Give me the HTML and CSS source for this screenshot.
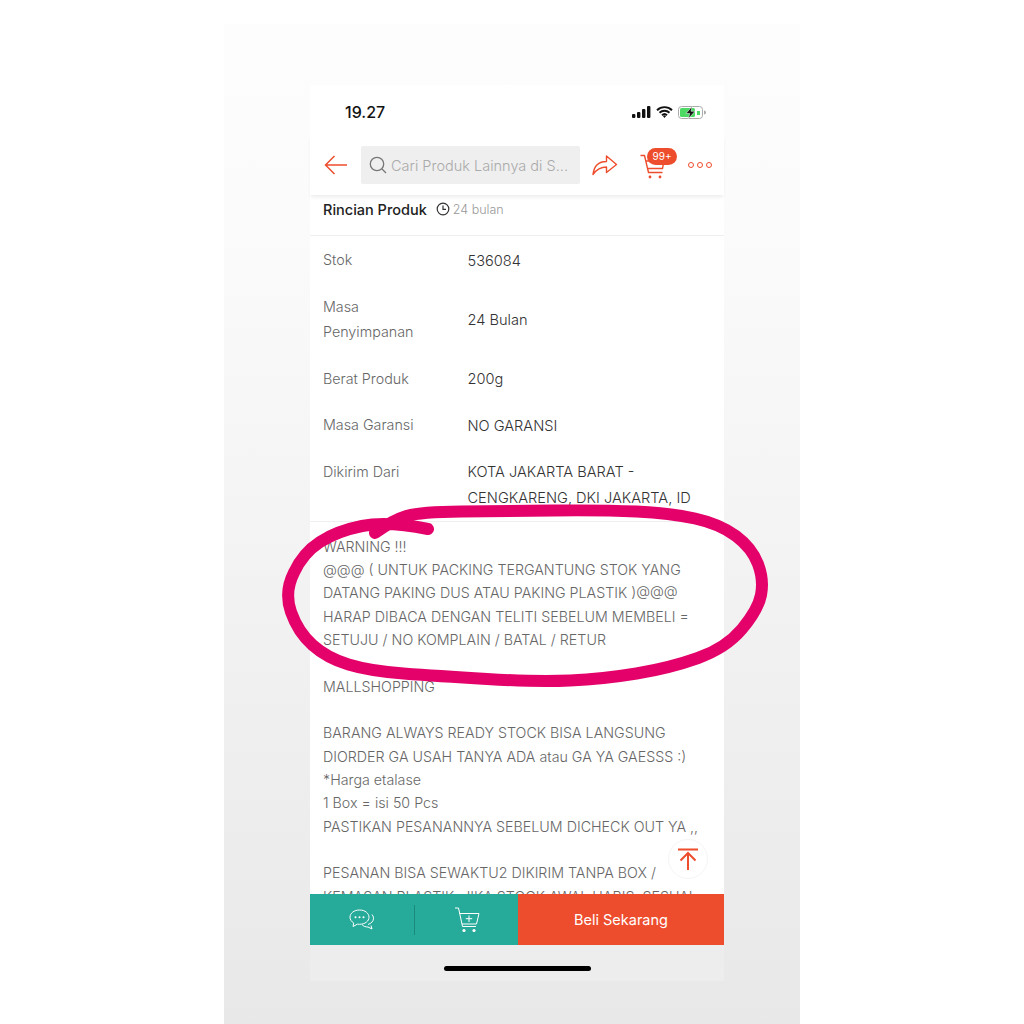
FILE: index.html
```html
<!DOCTYPE html>
<html lang="en">
<head>
    <meta charset="UTF-8">
    <title>Rincian Produk</title>
    <link rel="stylesheet" href="styles.css">
</head>
<body>
    <div class="backdrop">
        <div class="phone">
            <div class="status-bar">
                <span class="status-time">19.27</span>
                <div class="status-icons">
                    <svg width="19" height="12" viewBox="0 0 19 12"><rect x="0" y="8" width="3.4" height="4" rx="1" fill="#111"/><rect x="5" y="6" width="3.4" height="6" rx="1" fill="#111"/><rect x="10" y="3" width="3.4" height="9" rx="1" fill="#111"/><rect x="15" y="0" width="3.4" height="12" rx="1" fill="#111"/></svg>
                    <svg width="17" height="12" viewBox="0 0 17 12"><path d="M1 4.2a10.8 10.8 0 0 1 15 0M3.5 6.8a7.2 7.2 0 0 1 10 0M6 9.2a3.6 3.6 0 0 1 5 0" fill="none" stroke="#111" stroke-width="1.9"/><path d="M6.9 10l1.6 2 1.6-2a2.4 2.4 0 0 0-3.2 0z" fill="#111"/></svg>
                    <svg width="28" height="13" viewBox="0 0 28 13"><rect x=".5" y=".5" width="24" height="12" rx="3" fill="none" stroke="#aaa"/><rect x="2" y="2" width="15" height="9" rx="1.5" fill="#4cd964"/><rect x="19" y="5" width="3" height="4" fill="#4cd964"/><path d="M14 0.500L8 7.500h3.800L10.300 12.800 17 5.300h-3.900z" fill="#111" stroke="#fff" stroke-width=".5"/><path d="M26 4.500a2 2 0 0 1 0 4z" fill="#aaa"/></svg>
                </div>
            </div>

            <header class="top-bar">
                <svg class="back-icon" width="24" height="20" viewBox="0 0 24 20"><path d="M23 10H1.500M10.500 1L1.500 10l9 9" fill="none" stroke="#ee4d2d" stroke-width="1.500"/></svg>
                <div class="search-box">
                    <svg width="18" height="18" viewBox="0 0 18 18"><circle cx="8" cy="8" r="6.700" fill="none" stroke="#777" stroke-width="1.300"/><path d="M13 13l4 4" stroke="#777" stroke-width="1.300"/></svg>
                    <span>Cari Produk Lainnya di S...</span>
                </div>
                <svg class="share-icon" width="26" height="22" viewBox="0 0 26 22"><path d="M1 20.500C2 12 7 7.500 14.500 7.500V2l10 8.500-10 8v-5.500C9 13 4.500 15.500 1 20.500z" fill="none" stroke="#ee4d2d" stroke-width="1.400" stroke-linejoin="round"/></svg>
                <div class="cart">
                    <svg width="25" height="25" viewBox="0 0 25 25"><path d="M0.500 1.500H4.500L8.500 18.500H22.500M6 7H24L22.500 14.500H7.500" fill="none" stroke="#ee4d2d" stroke-width="1.400"/><circle cx="10" cy="23" r="1.400" fill="#ee4d2d"/><circle cx="20" cy="23" r="1.400" fill="#ee4d2d"/></svg>
                    <span class="cart-badge">99+</span>
                </div>
                <div class="more-dots"><i></i><i></i><i></i></div>
            </header>

            <main class="content">
                <div class="detail-head">
                    <span class="detail-title">Rincian Produk</span>
                    <svg width="14" height="14" viewBox="0 0 14 14"><circle cx="7" cy="7" r="5.800" fill="none" stroke="#333" stroke-width="1.200"/><path d="M7 3.500V7.300H10" fill="none" stroke="#333" stroke-width="1.200"/></svg>
                    <span class="detail-age">24 bulan</span>
                </div>

                <div class="spec-list">
                    <div class="spec-row"><div class="spec-label">Stok</div><div class="spec-value">536084</div></div>
                    <div class="spec-row"><div class="spec-label">Masa<br>Penyimpanan</div><div class="spec-value">24 Bulan</div></div>
                    <div class="spec-row"><div class="spec-label">Berat Produk</div><div class="spec-value">200g</div></div>
                    <div class="spec-row"><div class="spec-label">Masa Garansi</div><div class="spec-value">NO GARANSI</div></div>
                    <div class="spec-row spec-row-top"><div class="spec-label">Dikirim Dari</div><div class="spec-value">KOTA JAKARTA BARAT -<br>CENGKARENG, DKI JAKARTA, ID</div></div>
                </div>

                <p class="description">WARNING !!!<br>
                @@@ ( UNTUK PACKING TERGANTUNG STOK YANG<br>
                DATANG PAKING DUS ATAU PAKING PLASTIK )@@@<br>
                HARAP DIBACA DENGAN TELITI SEBELUM MEMBELI =<br>
                SETUJU / NO KOMPLAIN / BATAL / RETUR<br>
                <br>
                MALLSHOPPING<br>
                <br>
                BARANG ALWAYS READY STOCK BISA LANGSUNG<br>
                DIORDER GA USAH TANYA ADA atau GA YA GAESSS :)<br>
                *Harga etalase<br>
                1 Box = isi 50 Pcs<br>
                PASTIKAN PESANANNYA SEBELUM DICHECK OUT YA ,,<br>
                <br>
                PESANAN BISA SEWAKTU2 DIKIRIM TANPA BOX /<br>
                KEMASAN PLASTIK, JIKA STOCK AWAL HABIS, SESUAI</p>

                <div class="to-top">
                    <svg width="22" height="22" viewBox="0 0 22 22"><path d="M1 1.500H21M11 22V5M3.500 12.500L11 5l7.500 7.500" fill="none" stroke="#ee4d2d" stroke-width="2"/></svg>
                </div>
            </main>

            <div class="bottom-bar">
                <div class="teal-part">
                    <div class="teal-cell">
                        <svg width="26" height="21" viewBox="0 0 26 21"><path d="M19 15.500c3-1 5.500-3 5.500-6.200 0-1.500-.6-2.800-1.500-3.800" fill="none" stroke="#fff" stroke-width="1"/><path d="M10.500 1C5 1 1 4.300 1 8.200c0 2.400 1.500 4.500 3.700 5.800L4 17.500l4.500-2.400c.7.100 1.400.2 2 .2 5.500 0 9.500-3.200 9.500-7.100S16 1 10.500 1z" fill="none" stroke="#fff" stroke-width="1"/><path d="M13 15.500c1.500 2 4 2.500 6 2.500l4 2-1-3.500" fill="none" stroke="#fff" stroke-width="1"/><circle cx="6.500" cy="8.200" r="1" fill="#fff"/><circle cx="10.500" cy="8.200" r="1" fill="#fff"/><circle cx="14.500" cy="8.200" r="1" fill="#fff"/></svg>
                    </div>
                    <div class="teal-cell teal-cell-cart">
                        <svg width="26" height="26" viewBox="0 0 26 26"><path d="M1 1H4.500L8.500 19.500H22M5.500 6.500H25L22.500 17H8" fill="none" stroke="#fff" stroke-width="1"/><path d="M15 8.500v6.500M11.800 11.700h6.400" stroke="#fff" stroke-width="1"/><circle cx="10" cy="23.500" r="1.600" fill="#fff"/><circle cx="20" cy="23.500" r="1.600" fill="#fff"/></svg>
                    </div>
                </div>
                <div class="buy-now">Beli Sekarang</div>
            </div>

            <div class="home-area"><span class="home-indicator"></span></div>
        </div>
    </div>

    <!-- pen scribble drawn on top of the screenshot -->
    <svg class="ink" width="1024" height="1024" viewBox="0 0 1024 1024">
        <path d="M428 529 Q387 521 362 526 Q337 531 320 542 Q303 553 294 572.500 Q284 592 291 612 Q298 632 312.500 645 Q327 658 348.500 664.500 Q370 671 403.500 673.500 Q437 676 487 679 Q537 682 570 680.500 Q603 679 636.500 673.500 Q670 668 698 658 Q726 648 742 629 Q758 610 761 595 Q764 580 758 564 Q752 548 736 536 Q720 524 695 518.500 Q670 513 636.500 511.500 Q603 510 553 510.500 Q503 511 461.500 511.500 Q420 512 406.500 516 Q393 520 375 533" fill="none" stroke="#e4026a" stroke-width="12" stroke-linecap="round" stroke-linejoin="round"/>
    </svg>
</body>
</html>
```

FILE: styles.css
```css
* {
    margin: 0;
    padding: 0;
    box-sizing: border-box;
}

body {
    position: relative;
    height: 1024px;
    overflow: hidden;
    background: white;
    font-family: Inter, 'Noto Sans', sans-serif;
    color: #555;
}

.backdrop {
    width: 576px;
    height: 1000px;
    margin: 24px auto 0;
    padding: 61px 0 0 86px;
    background: linear-gradient(#fdfdfd, #fbfbfb 20%, #e8e8e8);
}

.phone {
    display: flex;
    flex-direction: column;
    width: 414px;
    height: 896px;
    background: white;
}

.status-bar {
    display: flex;
    justify-content: space-between;
    align-items: center;
    height: 50px;
    padding: 4px 18px 0 35px;
    flex-shrink: 0;
}

.status-time {
    font-size: 16px;
    font-weight: 500;
    color: #111;
}

.status-icons {
    display: flex;
    align-items: center;
    gap: 5px;
}

.top-bar {
    display: flex;
    align-items: center;
    height: 60px;
    padding-left: 14px;
    flex-shrink: 0;
    background: white;
    box-shadow: 0 3px 4px -1px rgba(0,0,0,0.08);
    position: relative;
    z-index: 2;
}

.back-icon {
    flex-shrink: 0;
}

.search-box {
    display: flex;
    align-items: center;
    gap: 4px;
    width: 219px;
    height: 38px;
    margin-left: 13px;
    padding-left: 8px;
    background: #efefef;
    border-radius: 2px;
    font-size: 14.5px;
    font-weight: 300;
    color: #aaa;
    white-space: nowrap;
}

.share-icon {
    margin-left: 12px;
    flex-shrink: 0;
}

.cart {
    position: relative;
    width: 25px;
    height: 25px;
    margin-left: 22px;
    margin-top: 3px;
}

.cart-badge {
    position: absolute;
    top: -6px;
    left: 7px;
    width: 30px;
    height: 17px;
    border-radius: 9px;
    background: #ee4d2d;
    color: #fff;
    font-size: 10px;
    line-height: 17px;
    text-align: center;
}

.more-dots {
    display: flex;
    gap: 3px;
    margin-left: 23px;
}

.more-dots i {
    width: 6px;
    height: 6px;
    border: 1px solid #ee4d2d;
    border-radius: 50%;
}

.content {
    position: relative;
    flex: 1;
    overflow: hidden;
    background: white;
}

.detail-head {
    display: flex;
    align-items: center;
    height: 41px;
    padding: 0 13px 12px;
    border-bottom: 1px solid #efefef;
}

.detail-title {
    font-size: 14.5px;
    font-weight: 500;
    color: #222;
}

.detail-head svg {
    margin-left: 9px;
}

.detail-age {
    margin-left: 3px;
    font-size: 12.5px;
    font-weight: 300;
    color: #999;
}

.spec-list {
    display: flex;
    flex-direction: column;
    gap: 21px;
    padding: 11px 13px 11px;
    border-bottom: 1px solid #efefef;
    font-size: 14.3px;
    font-weight: 300;
    line-height: 25.5px;
}

.spec-row {
    display: flex;
    align-items: center;
}

.spec-row-top {
    align-items: flex-start;
}

.spec-label {
    width: 144.5px;
    color: #666;
}

.spec-value {
    margin: 1.5px 0 -1.5px;
    font-size: 14.6px;
    white-space: nowrap;
    color: #333;
}

.description {
    padding: 13px 13px 0;
    font-size: 14.25px;
    font-weight: 300;
    line-height: 23.35px;
    color: #666;
    white-space: nowrap;
}

.to-top {
    position: absolute;
    top: 644px;
    right: 16px;
    display: flex;
    align-items: center;
    justify-content: center;
    width: 40px;
    height: 40px;
    border: 1px solid #f5f5f5;
    border-radius: 50%;
    background: rgba(255,255,255,0.9);
}

.bottom-bar {
    display: flex;
    height: 51px;
    flex-shrink: 0;
}

.teal-part {
    display: flex;
    align-items: center;
    width: 208px;
    background: #26aa99;
}

.teal-cell {
    display: flex;
    align-items: center;
    justify-content: center;
    width: 104px;
    height: 30px;
}

.teal-cell-cart {
    border-left: 1px solid #1a8a7c;
}

.buy-now {
    flex: 1;
    background: #ee4d2d;
    color: #fff;
    font-size: 14.5px;
    line-height: 51px;
    text-align: center;
}

.home-area {
    display: flex;
    justify-content: center;
    height: 36px;
    padding-top: 21px;
    background: #eeeded;
    flex-shrink: 0;
}

.home-indicator {
    width: 147px;
    height: 5px;
    border-radius: 3px;
    background: #000;
}

.ink {
    position: absolute;
    top: 0;
    left: 0;
    pointer-events: none;
}
```
